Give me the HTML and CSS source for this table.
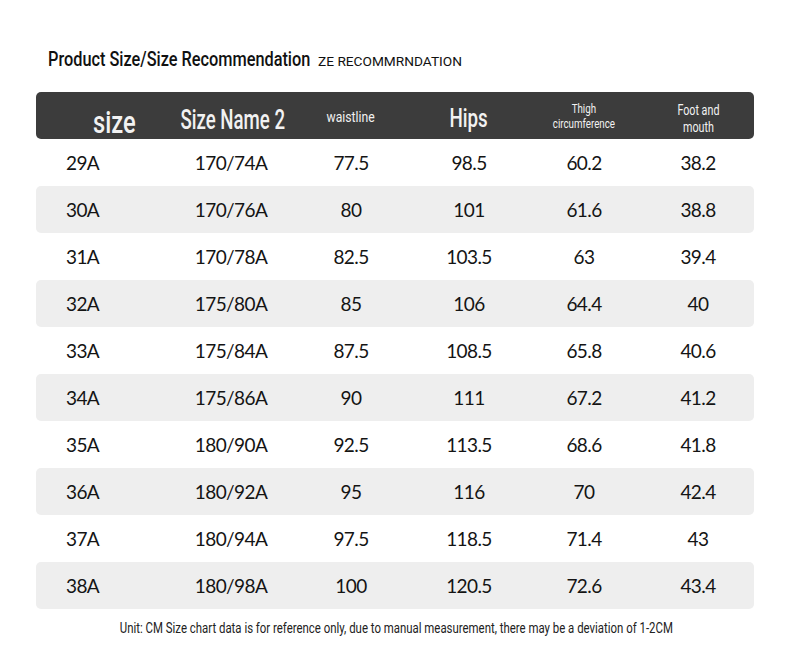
FILE: index.html
```html
<!DOCTYPE html>
<html>
<head>
<meta charset="utf-8">
<link rel="stylesheet" href="styles.css">
</head>
<body>
<div class="page">
  <div class="title-row">
    <span class="title"><span class="title-in">Product Size/Size Recommendation</span></span>
    <span class="subtitle">ZE RECOMMRNDATION</span>
  </div>
  <div class="table">
    <div class="head">
      <div class="h h-size"><span class="sq">size</span></div>
      <div class="h h-name"><span class="sq">Size Name 2</span></div>
      <div class="h h-waist"><span class="sq">waistline</span></div>
      <div class="h h-hips"><span class="sq">Hips</span></div>
      <div class="h h-thigh"><span class="sq">Thigh<br>circumference</span></div>
      <div class="h h-foot"><span class="sq">Foot and<br>mouth</span></div>
    </div>
    <div class="row"><div class="c first">29A</div><div class="c">170/74A</div><div class="c">77.5</div><div class="c">98.5</div><div class="c">60.2</div><div class="c">38.2</div></div>
    <div class="row alt"><div class="c first">30A</div><div class="c">170/76A</div><div class="c">80</div><div class="c">101</div><div class="c">61.6</div><div class="c">38.8</div></div>
    <div class="row"><div class="c first">31A</div><div class="c">170/78A</div><div class="c">82.5</div><div class="c">103.5</div><div class="c">63</div><div class="c">39.4</div></div>
    <div class="row alt"><div class="c first">32A</div><div class="c">175/80A</div><div class="c">85</div><div class="c">106</div><div class="c">64.4</div><div class="c">40</div></div>
    <div class="row"><div class="c first">33A</div><div class="c">175/84A</div><div class="c">87.5</div><div class="c">108.5</div><div class="c">65.8</div><div class="c">40.6</div></div>
    <div class="row alt"><div class="c first">34A</div><div class="c">175/86A</div><div class="c">90</div><div class="c">111</div><div class="c">67.2</div><div class="c">41.2</div></div>
    <div class="row"><div class="c first">35A</div><div class="c">180/90A</div><div class="c">92.5</div><div class="c">113.5</div><div class="c">68.6</div><div class="c">41.8</div></div>
    <div class="row alt"><div class="c first">36A</div><div class="c">180/92A</div><div class="c">95</div><div class="c">116</div><div class="c">70</div><div class="c">42.4</div></div>
    <div class="row"><div class="c first">37A</div><div class="c">180/94A</div><div class="c">97.5</div><div class="c">118.5</div><div class="c">71.4</div><div class="c">43</div></div>
    <div class="row alt"><div class="c first">38A</div><div class="c">180/98A</div><div class="c">100</div><div class="c">120.5</div><div class="c">72.6</div><div class="c">43.4</div></div>
  </div>
  <div class="note"><span class="note-in">Unit: CM Size chart data is for reference only, due to manual measurement, there may be a deviation of 1-2CM</span></div>
</div>
</body>
</html>
```
FILE: styles.css
```css
html, body {
  margin: 0;
  padding: 0;
  background: #ffffff;
}
.page {
  width: 790px;
  height: 646px;
  padding: 47px 36px 0 36px;
  box-sizing: border-box;
  font-family: "Lato", "Noto Sans", sans-serif;
  color: #141414;
}
.title-row {
  display: flex;
  align-items: baseline;
  padding-left: 12px;
  height: 45px;
}
.title {
  display: inline-block;
  width: 262px;
  white-space: nowrap;
}
.title-in {
  display: inline-block;
  font-family: "Roboto", sans-serif;
  font-size: 20px;
  font-weight: 500;
  color: #111;
  transform: scaleX(0.815);
  transform-origin: left center;
}
.subtitle {
  font-family: "Roboto", "Noto Sans", sans-serif;
  font-size: 13.7px;
  font-weight: 400;
  margin-left: 8px;
  color: #111;
}
.table {
  display: flex;
  flex-direction: column;
}
.head, .row {
  display: grid;
  grid-template-columns: 136px 118px 122px 114px 116px 112px;
  align-items: center;
  border-radius: 5px;
}
.head {
  height: 47px;
  background: #3c3c3c;
  color: #f2f2f2;
  font-family: "Roboto", sans-serif;
  font-weight: 500;
}
.h {
  display: flex;
  justify-content: center;
  white-space: nowrap;
  text-align: center;
}
.sq {
  display: inline-block;
}
.h-size {
  justify-content: flex-start;
  padding-left: 57px;
  font-size: 32px;
  line-height: 32px;
  padding-top: 12px;
}
.h-size .sq { transform: scaleX(0.74); transform-origin: left center; }
.h-name {
  font-size: 27px;
  line-height: 27px;
  padding-top: 9px;
  padding-left: 4px;
}
.h-name .sq { transform: scaleX(0.69); }
.h-waist {
  font-size: 14px;
  line-height: 14px;
  font-weight: 400;
  padding-top: 3px;
}
.h-waist .sq { transform: scaleX(0.87); }
.h-hips {
  font-size: 25px;
  line-height: 25px;
  padding-top: 5px;
}
.h-hips .sq { transform: scaleX(0.75); }
.h-thigh {
  font-size: 12.5px;
  line-height: 15px;
  font-weight: 400;
  padding-top: 1px;
}
.h-thigh .sq { transform: scaleX(0.78); }
.h-foot {
  font-size: 14.5px;
  line-height: 17px;
  font-weight: 400;
  padding-top: 6px;
}
.h-foot .sq { transform: scaleX(0.74); }
.row {
  height: 47px;
}
.row.alt {
  background: #eeeeee;
}
.c {
  text-align: center;
  font-size: 19px;
  letter-spacing: -0.6px;
}
.c.first {
  text-align: left;
  padding-left: 30px;
}
.note {
  display: flex;
  justify-content: center;
  padding-top: 11px;
  padding-left: 2px;
  white-space: nowrap;
}
.note-in {
  display: inline-block;
  font-family: "Roboto", sans-serif;
  font-size: 14px;
  color: #222;
  transform: scaleX(0.815);
}
```
